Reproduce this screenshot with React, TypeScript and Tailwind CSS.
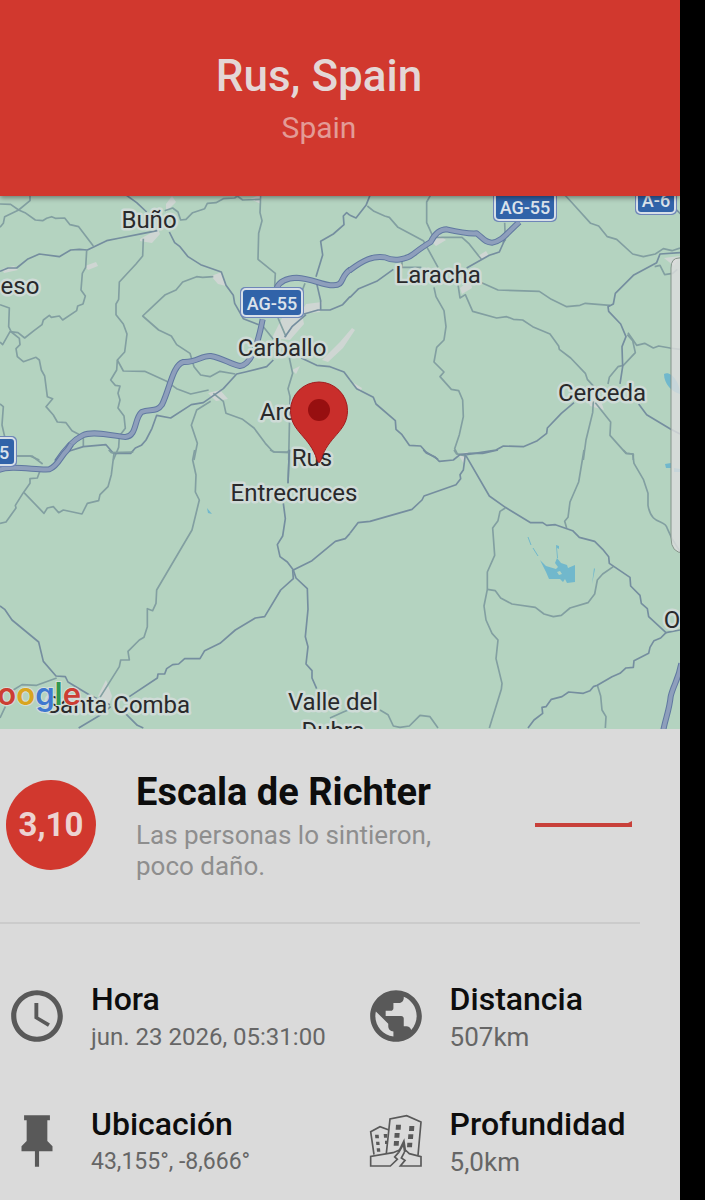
import React from 'react';
import { MdAccessTime, MdPublic } from 'react-icons/md';

const QUAKE = {
  place: 'Rus, Spain',
  country: 'Spain',
  magnitude: '3,10',
  scale: 'Escala de Richter',
  effect: 'Las personas lo sintieron, poco daño.',
};

// Each tile of roads is drawn on its own grid, three units to a map pixel
const TILES = [
  {
    transform: 'translate(0 -16) scale(0.33333)',
    minor: [
      'M0 72 L32 73 L56 90 L90 62 L90 40',
      'M56 90 L14 110 L10 130 L0 142',
      'M56 90 L75 98 L106 120 L128 122 L140 115 L155 110 L166 115 L194 114 L210 134 L236 140 L280 198',
      'M260 212 L257 262 L247 280 L243 330 L256 348 L249 372 L233 378 L230 392 L188 420 L178 408 L154 412 L148 406 L130 420 L126 434 L102 452 L74 474 L54 458 L30 455 L8 494 L0 486',
      'M0 374 L28 384 L26 440 L34 456 L58 475 L60 494 L48 506 L52 530 L70 545 L108 532 L118 540 L124 570 L134 588 L142 650 L158 656 L138 680 L160 705 L172 726 L198 728 L216 752 L250 770 L250 798',
      'M0 672 L10 680 L6 735 L14 770',
      'M46 828 L90 828 L118 840',
      'M430 176 L428 228 L408 252 L358 306 L356 358 L348 372 L348 404 L370 432 L381 462 L374 516 L352 540 L350 570 L332 600 L346 616 L360 618 L354 640 L360 660 L354 684 L372 708 L376 745 L358 768 L356 802 L340 840',
      'M352 540 L370 573 L434 574 L500 604 L530 626 L572 642 L626 630',
      'M640 290 L608 292 L590 290 L548 306 L528 330 L496 344 L464 374 L428 408 L476 450 L514 468 L530 494 L570 520 L582 560 L602 585 L630 590 L660 574 L706 582',
      'M494 92 L518 84 L534 96 L542 120 L558 118 L578 98 L614 86 L622 70 L648 68 L670 56 L704 54 L712 48 L728 60 L780 58',
      'M782 48 L780 98 L786 122 L776 160 L774 238 L826 280 L824 320',
      'M640 640 L670 664 L678 700 L728 718 L762 744 L796 790 L820 816 L870 818',
      'M632 664 L590 690 L574 736 L592 790 L582 840',
      'M915 310 L906 334 M834 414 L858 470 M790 440 L820 478',
      'M868 534 L878 580 L864 626 L870 650 L866 840',
    ],
    major: [
      'M0 274 L24 264 L50 264 L82 238 L118 222 L178 230 L212 210 L238 208 L262 210 L320 182 L360 174 L430 160 L472 152',
      'M374 42 L410 68 L440 96 M508 156 L524 188 L540 200 L564 230 L602 254 L664 276 L678 316 L700 346 L704 370 L730 416 L776 434',
      'M948 290 L968 225 L962 184 L1000 162 L1032 134 L1030 108 L1040 98 L1050 106',
      'M950 310 L962 362 L962 388 M912 402 L954 390 L990 390 L1028 374 L1050 350 M918 404 L876 440 L854 472',
      'M904 534 L950 556 L990 560 L1032 576 L1050 600',
      'M820 540 L800 560 L736 576 L710 582 L670 626 L610 668 L574 674 L512 714 L470 706 L456 745 L438 780 L424 796 L406 804 L392 820 L340 820 L318 794 L250 800 L206 814',
    ],
    motorway: 'M170 846 C190 815 215 782 248 766 S350 770 376 771 C412 768 402 715 425 696 C450 685 470 698 486 674 C510 625 518 555 550 546 C590 548 605 526 632 528 C670 535 690 552 720 558 C750 555 770 510 788 418 M830 324 C840 300 865 294 890 293 C940 296 965 316 1000 316 C1035 316 1018 290 1052 268',
  },
  {
    transform: 'translate(350 -16) scale(0.33333)',
    minor: [
      'M52 78 L72 94 L104 108 L118 112 L144 142 L220 182 L264 262',
      'M242 45 L230 66 L230 128 L250 172 L336 172 L356 190 L394 238',
      'M156 242 L156 262 L214 262',
      'M640 40 L664 66 L722 130 L746 138 L772 170 L800 178 L848 222 L880 230 L916 222 L940 206 L966 212 L990 204',
      'M982 268 L968 280 L944 284 L930 256 L914 260',
      'M390 306 L444 330 L568 334 L604 358 L650 380 L690 376 L706 370 L780 376',
      'M324 314 L330 354 L346 344 L368 394 L440 414 L470 410 L490 418 L518 420 L548 440 L600 462 L626 498 L628 508 L662 534 L706 580 L712 598 L734 622',
      'M252 322 L258 350 L282 392 L288 440 L282 480 L260 502 L252 546 L282 576 L270 590 L304 628 L326 632 L338 660 L340 710 L328 764 L314 806 L322 822 L346 828',
      'M834 458 L860 496 L884 490 L910 504 L926 498 L960 504 L990 508',
      'M774 612 L778 592 L804 560 L820 556 L856 518 L848 482 L832 464',
      'M730 664 L728 698 L708 780 L700 840',
      'M736 668 L782 726 L780 766 L828 820 L850 822 L850 840',
      'M464 128 L466 180 L458 188',
    ],
    major: [
      'M60 46 L48 76 L18 114 L0 106',
      'M0 352 L26 326 L80 304 L130 268',
      'M464 180 L448 216 L418 226 L350 264',
      'M990 218 L930 222 L920 248 L850 286 L796 340 L790 372 L774 380 L776 394 L812 432 L828 470 L816 500 L818 560 L810 612',
      'M0 600 L20 626 L70 652 L78 672 L136 722 L138 748 L156 764 L178 796 L212 798 L228 816 L264 838',
      'M672 668 L634 700 L592 744 L590 760 L562 782 L520 800 L460 798 L438 810 L350 824',
      'M866 672 L890 704 L960 746 L990 762',
      'M974 84 L992 102',
    ],
    motorway: 'M-2 272 C40 240 70 226 105 232 C130 244 168 240 190 222 C212 205 225 196 242 186 C255 160 270 148 290 148 C320 155 350 162 380 160 C400 175 405 188 426 188 C455 185 470 160 508 126',
  },
  {
    transform: 'translate(0 254) scale(0.33333)',
    minor: [
      'M46 18 L96 18 L128 42 M120 62 L112 84 L90 86 L90 100 L70 128 L46 166 L48 174 L18 216 L0 220',
      'M72 128 L132 190 L142 174 L160 170 L176 188 L190 180 L246 192 L262 160 L296 152 L300 134 L324 110 L334 74 L342 10',
      'M326 0 L334 8 L400 6',
      'M584 0 L578 30 L588 75 L586 126 L598 150 L576 240 L470 420 L468 460 L458 482 L442 476 L442 530 L432 562 L418 570 L384 604 L388 630 L362 630 L358 650 L300 742',
      'M0 804 L16 770 M170 684 L110 706 L66 704 L40 720',
      'M810 0 L824 6 L862 6 L868 0 L864 100',
      'M990 804 L1030 786 L1050 778',
    ],
    major: [
      'M0 468 L14 478 L36 510 L116 576 L130 634 L168 678 L196 680 L204 696 L270 736 L330 764',
      'M236 834 L300 796 L332 770 M388 740 L472 684 L474 672 L494 672 L500 656 L518 644 L536 642 L554 626 L600 626 L614 602 L660 580 L706 540 L766 504 L794 500 L842 420 L880 386 L878 360',
      'M376 790 L412 826 L430 834',
      'M1050 250 L1036 266 L1006 274 L936 332 L880 360 L862 336 L840 320 L832 284 L848 258 L856 206 L850 160 M868 0 L864 100',
      'M880 360 L888 384 L922 416 L924 478 L916 560 L924 590 L918 642 L936 662 L936 684 L950 716',
    ],
    motorway: 'M-8 62 C30 42 110 62 148 58 C176 46 180 20 202 0 L214 -18',
  },
  {
    transform: 'translate(350 254) scale(0.33333)',
    minor: [
      'M702 0 L686 96 L660 156 L654 202 L644 214 L650 234',
      'M820 0 L830 10 L848 12 L852 40 L880 88 L894 130 L894 166 C905 230 945 205 952 236 L966 266 L992 308',
      'M466 174 L450 184 L444 212 L428 234 L434 316 L412 366 L412 418 L402 468 L408 510 L426 550 L444 570 L438 626 L456 700 L454 718 L418 834',
      'M412 418 L436 422 L452 444 L486 462 L556 472 L582 492 L610 500 L634 496 L660 474 L714 458 L734 432 L742 390 L758 372 L790 350',
      'M90 780 L114 794 L130 828 L150 832 L178 828 L210 796 L240 800 L264 834',
      'M742 706 L752 738 L756 780 L768 800 L766 834',
      'M312 0 L320 12 L346 14',
    ],
    major: [
      'M220 0 L230 10 L254 20 L268 34 L310 30 L330 14 L360 10 L398 10 L444 0',
      'M346 14 L418 138 L466 172 L542 218 L578 218 L590 226 L616 224 L668 242 L688 262 L734 274 L758 298 L776 320 L778 340 L840 382 L842 408 L870 436 L874 460 L892 476 L896 500 L948 548 L990 540',
      'M346 14 L340 60 L330 74 L332 86 L318 104 L222 138 L216 150 L186 178 L60 214 L24 218 L0 250',
      'M948 548 L932 564 L912 572 L900 592 L896 610 L852 632 L850 652 L828 654 L810 670 L786 680 L742 706 L730 710 L720 722 L700 730 L656 726 L636 740 L604 748 L588 770 L576 772 L578 790 L552 810 L534 834',
    ],
    motorway: 'M994 640 C985 690 970 705 962 740 C958 780 948 800 940 840',
  },
];

const TOWNS = [
  { name: 'Buño', x: 149, y: 32 },
  { name: 'eso', x: 20, y: 98 },
  { name: 'Laracha', x: 438, y: 87 },
  { name: 'Carballo', x: 282, y: 160 },
  { name: 'Cerceda', x: 602, y: 205 },
  { name: 'Ardaña', x: 298, y: 224 },
  { name: 'Rus', x: 312, y: 270 },
  { name: 'Entrecruces', x: 294, y: 305 },
  { name: 'Santa Comba', x: 118, y: 517 },
  { name: 'Valle del', x: 333, y: 514 },
  { name: 'Dubra', x: 333, y: 543 },
  { name: 'O', x: 672, y: 432 },
];

const SHIELDS = [
  { name: 'AG-55', x: 272, y: 107, w: 58 },
  { name: 'AG-55', x: 525, y: 11, w: 58 },
  { name: 'A-6', x: 656, y: 4, w: 36 },
  { name: '5', x: 4, y: 256, w: 20 },
];

function EpicenterMap() {
  return (
    <svg viewBox="0 0 680 533" preserveAspectRatio="xMidYMid slice" className="block w-full h-[533px] bg-[#b4d3c0]" role="img" aria-label="Mapa del epicentro">
      {/* Built-up areas */}
      <g fill="#cfd6d3">
        <path d="M140 43 L158 33 L160 38 L152 47 L140 45Z M85 70 L96 66 L98 70 L88 74Z M2 73 L14 70 L18 74 L4 77Z M211 80 L222 76 L226 90 L218 88Z M250 3 L262 -2 L261 8Z M306 108 L322 106 L320 116 L300 118Z M282 122 L302 118 L304 128 L290 144 L272 142Z M322 164 L340 146 L352 132 L355 134 L343 152 L328 166Z M208 197 L220 194 L228 203 L216 205Z M292 174 L300 170 L296 178Z M166 8 L172 0 L176 6 L166 16Z" />
        <path d="M478 60 L486 55 L489 60 L480 64Z M460 92 L470 84 L472 92 L462 98Z M430 44 L438 38 L446 44 L436 50Z M664 62 L680 60 L674 70Z M352 186 L362 192 L360 196Z M458 258 L468 256 L464 268Z M98 500 L106 484 L112 500 L108 512Z M584 192 L596 190 L604 214 L590 210Z" />
      </g>
      <g fill="#71b8cc">
        <path fillRule="evenodd" d="M540 364 L546 370 L556 373 L558 371 L555 367 L557 362 L561 367 L567 369 L568 372 L575 369 L575 386 L567 387 L565 383 L563 386 L560 383 L549 383 L546 376Z M557 376 L560 375 L562 378 L559 379Z" />
        <path d="M556 349 L559 350 L559 353 L557 352 L558 362 L557 362Z M594 372 L595 373 L592 388Z M207 312 L212 318 L208 317Z M664 178 C670 174 680 185 680 198 C672 196 664 188 664 178Z M665 268 L671 267 L671 272 L666 272Z M674 272 L680 273 L680 276 L674 276Z" />
        <path d="M528 341 L531 349 M533 352 L538 360" fill="none" stroke="#71b8cc" />
      </g>

      {TILES.map((tile) => (
        <g key={tile.transform} transform={tile.transform} fill="none" strokeLinejoin="round">
          {tile.minor.map((d) => (
            <path key={d} d={d} stroke="#829fa1" strokeWidth="5" />
          ))}
          {tile.major.map((d) => (
            <path key={d} d={d} stroke="#758e9f" strokeWidth="5" />
          ))}
          <path d={tile.motorway} stroke="#6078a0" strokeWidth="18" />
          <path d={tile.motorway} stroke="#8e9fbc" strokeWidth="12" />
        </g>
      ))}

      {/* Zoom control, half off the edge */}
      <path d="M684 62 H679 Q671 62 671 72 V342 Q671 357 684 357Z" fill="#dddddd" fillOpacity="0.8" stroke="#849389" />

      {SHIELDS.map((s) => (
        <g key={s.name + s.x}>
          <rect x={s.x - s.w / 2 - 3} y={s.y - 16} width={s.w + 6} height="31" rx="5" fill="#6e86b8" />
          <rect x={s.x - s.w / 2 - 1} y={s.y - 14} width={s.w + 2} height="27" rx="4" fill="#3163a9" stroke="#d7dfe8" strokeWidth="2" />
          <text x={s.x} y={s.y + 7} textAnchor="middle" className="font-['Roboto',sans-serif] text-[18px] font-medium" fill="#dce3ec">
            {s.name}
          </text>
        </g>
      ))}

      <g className="font-['Roboto',sans-serif] text-[24px]" fill="#29292b" stroke="#cfdbd7" strokeWidth="5" strokeLinejoin="round" paintOrder="stroke" textAnchor="middle">
        {TOWNS.map((town) => (
          <text key={town.name} x={town.x} y={town.y}>
            {town.name}
          </text>
        ))}
      </g>

      <text x="81" y="509" textAnchor="end" className="font-['Inter',sans-serif] text-[31px] font-semibold" stroke="#d5dfda" strokeWidth="2" paintOrder="stroke">
        <tspan fill="#cc3e33">o</tspan>
        <tspan fill="#d9a520">o</tspan>
        <tspan fill="#3f78d0">g</tspan>
        <tspan fill="#319850">l</tspan>
        <tspan fill="#cc3e33">e</tspan>
      </text>

      {/* Epicenter pin */}
      <path d="M290.500 214.500 a28.500 28.500 0 0 1 57 0 C347.500 236 328 240 321 264 Q319 269 317 264 C310 240 290.500 236 290.500 214.500Z" fill="#c92e2b" stroke="#a11d1f" />
      <circle cx="319" cy="214" r="11" fill="#970f10" />
    </svg>
  );
}

function PushPin({ className }: { className?: string }) {
  return (
    <svg viewBox="0 0 24 24" fill="currentColor" className={className} aria-hidden="true">
      <path d="M16 12V4h1V2H7v2h1v8l-2 2v2h5.200v6h1.600v-6H18v-2z" />
    </svg>
  );
}

function CrackedBuildings({ className }: { className?: string }) {
  return (
    <svg viewBox="45 426 186 186" className={className} aria-hidden="true">
      <g fill="none" stroke="currentColor" strokeWidth="5">
        <path d="M72 560 L62 491 L90 476 L115 485" />
        <path d="M109 556 L120 453 L170 443 L213 462 L204 562" />
        <path d="M149 546 L129 554 L62 565 V594 H121 L142 574 L134 567 L146 553" />
        <path d="M166 546 L178 557 L213 566 V594 H151 L165 577 L154 570 L163 553" />
      </g>
      <g fill="currentColor">
        <path d="M138 470h15l-1 15h-15z M178 474h15l-1 15h-15z M134 495h15l-1 14h-15z M175 499h15l-1 14h-15z M132 519h15l-1 14h-15z M172 524h15l-1 14h-15z" />
        <path d="M75 500h11l1 11h-11z M101 498h11l-1 11h-9z M78 521h10l1 10h-10z M105 518h7l-1 10h-6z M80 541h10l1 10h-10z" />
        <path d="M163 511 L169 550 L162 556 L159 536 L148 555 L143 551z" />
      </g>
    </svg>
  );
}

const DETAILS = [
  { label: 'Hora', value: 'jun. 23 2026, 05:31:00', icon: MdAccessTime, size: 'text-[24px]' },
  { label: 'Distancia', value: '507km', icon: MdPublic, size: 'text-[26px]' },
  { label: 'Ubicación', value: '43,155°, -8,666°', icon: PushPin, size: 'text-[23px]' },
  { label: 'Profundidad', value: '5,0km', icon: CrackedBuildings, size: 'text-[26px]' },
];

export default function App() {
  return (
    <div className="min-h-screen bg-black pr-[25px] font-['Roboto',sans-serif]">
      <main className="min-h-screen bg-[#dadada]">
        <header className="relative z-10 flex flex-col items-center gap-1 bg-[#d1382e] py-12 pr-[42px] shadow-[0_2px_5px_rgba(0,0,0,0.4)]">
          <h1 className="text-[44px] leading-[56px] font-medium text-[#e4d7d6]">{QUAKE.place}</h1>
          <p className="text-[30px] leading-[40px] text-[#e39b96]">{QUAKE.country}</p>
        </header>

        <EpicenterMap />

        <section className="mr-10 flex items-center border-b-2 border-[#cbcbcb] pt-[39px] pr-2 pb-10 pl-[6px]">
          <div className="flex size-[90px] shrink-0 items-center justify-center rounded-full bg-[#d1382e] text-[33px] font-bold text-[#ecd3d1]">
            {QUAKE.magnitude}
          </div>
          <div className="ml-10 max-w-[320px]">
            <h2 className="text-[38px] leading-[48px] font-bold whitespace-nowrap text-[#0d0d0d]">{QUAKE.scale}</h2>
            <p className="mt-1 text-[26px] leading-[31px] text-[#8e8e8e]">{QUAKE.effect}</p>
          </div>
          <svg viewBox="0 0 97 8" className="ml-auto w-[97px] shrink-0" aria-hidden="true">
            <path d="M0 2 H93 L97 0 V6 H0Z" fill="#c8403a" />
          </svg>
        </section>

        <section className="grid grid-cols-[7fr_6fr] gap-y-[51px] pt-[55px] pr-2 pb-[22px] pl-[6px]">
          {DETAILS.map(({ label, value, icon: Icon, size }) => (
            <div key={label} className="flex items-center gap-[23px]">
              <Icon className="size-[62px] shrink-0 text-[#595959]" />
              <div>
                <h3 className="text-[32px] leading-[40px] font-medium text-[#0d0d0d]">{label}</h3>
                <p className={`mt-[2px] leading-[32px] whitespace-nowrap text-[#666666] ${size}`}>{value}</p>
              </div>
            </div>
          ))}
        </section>
      </main>
    </div>
  );
}
